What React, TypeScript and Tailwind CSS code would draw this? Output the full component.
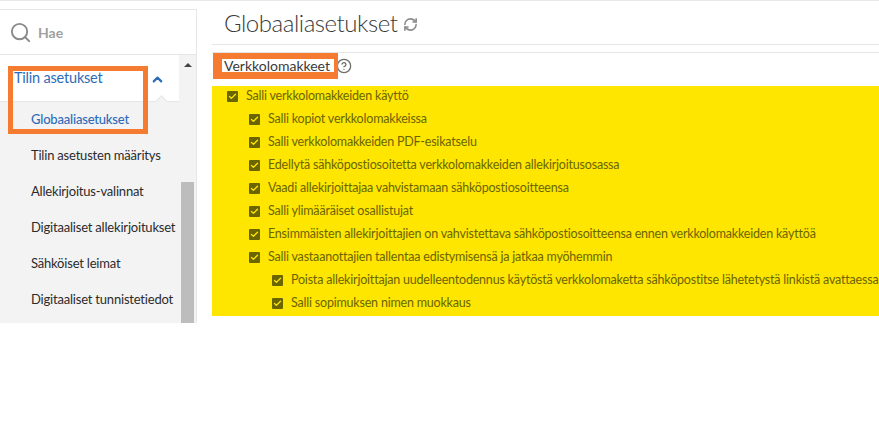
import React from 'react';
import { Check, ChevronUp, HelpCircle, RefreshCw, Search } from 'lucide-react';

const navItems = [
  'Tilin asetusten määritys',
  'Allekirjoitus-valinnat',
  'Digitaaliset allekirjoitukset',
  'Sähköiset leimat',
  'Digitaaliset tunnistetiedot',
];

const options = [
  { label: 'Salli verkkolomakkeiden käyttö', indent: 0 },
  { label: 'Salli kopiot verkkolomakkeissa', indent: 1 },
  { label: 'Salli verkkolomakkeiden PDF-esikatselu', indent: 1 },
  { label: 'Edellytä sähköpostiosoitetta verkkolomakkeiden allekirjoitusosassa', indent: 1 },
  { label: 'Vaadi allekirjoittajaa vahvistamaan sähköpostiosoitteensa', indent: 1 },
  { label: 'Salli ylimääräiset osallistujat', indent: 1 },
  { label: 'Ensimmäisten allekirjoittajien on vahvistettava sähköpostiosoitteensa ennen verkkolomakkeiden käyttöä', indent: 1 },
  { label: 'Salli vastaanottajien tallentaa edistymisensä ja jatkaa myöhemmin', indent: 1 },
  { label: 'Poista allekirjoittajan uudelleentodennus käytöstä verkkolomaketta sähköpostitse lähetetystä linkistä avattaessa', indent: 2 },
  { label: 'Salli sopimuksen nimen muokkaus', indent: 2 },
];

function Option({ label, indent }: { label: string; indent: number }) {
  const pad = indent === 0 ? 'pl-[15px]' : indent === 1 ? 'pl-[37px]' : 'pl-[60px]';
  return (
    <div className={`flex h-[23px] items-center whitespace-nowrap ${pad}`}>
      <span className="mr-[8px] flex h-[11px] w-[11px] shrink-0 items-center justify-center rounded-[1px] bg-[#6b6500]">
        <Check size={9} strokeWidth={3.5} className="text-[#ffe600]" />
      </span>
      <span className="text-[12.5px] tracking-[-0.2px] text-[#6b6500]">{label}</span>
    </div>
  );
}

export default function App() {
  return (
    <div className="relative h-[431px] w-[879px] overflow-hidden bg-white font-['Lato',sans-serif]">
      <div className="flex h-[323px] border-t border-[#e8e8e8]">
        {/* Sidebar */}
        <aside className="mt-[8px] flex w-[197px] shrink-0 flex-col border-r border-[#e6e6e6]">
          <div className="flex h-[46px] shrink-0 items-center gap-[6px] border-y border-[#e6e6e6] pl-[9px]">
            <Search size={23} strokeWidth={2} className="text-[#8a8a8a]" />
            <span className="text-[14px] font-bold text-[#a0a0a0]">Hae</span>
          </div>
          <div className="flex min-h-0 flex-1">
            <div className="min-w-0 flex-1 bg-[#f3f3f3]">
              <div className="relative flex h-[47px] items-start justify-between border-b border-[#e6e6e6] bg-white pl-[14px] pr-[14px] pt-[13px]">
                <span className="text-[14.5px] leading-[20px] tracking-[-0.2px] text-[#2d6cb8]">Tilin asetukset</span>
                <ChevronUp size={15} strokeWidth={3.5} className="mt-[4px] text-[#2d6cb8]" />
                <div className="absolute bottom-[-5px] right-[13px] h-[9px] w-[9px] rotate-45 border-l border-t border-[#e6e6e6] bg-[#f3f3f3]" />
              </div>
              <div className="pl-[31px] text-[13px] tracking-[-0.2px] text-[#2b2b2b]">
                <div className="flex h-[36px] items-center font-medium text-[#2d6cb8]">Globaaliasetukset</div>
                {navItems.map((item) => (
                  <div key={item} className="flex h-[36px] items-center whitespace-nowrap">
                    {item}
                  </div>
                ))}
              </div>
            </div>
            <div className="flex w-[17px] shrink-0 flex-col items-center bg-[#f3f3f3]">
              <div className="mt-[8px] h-0 w-0 border-x-[4px] border-b-[4px] border-x-transparent border-b-[#444]" />
              <div className="mt-[115px] w-[13px] flex-1 bg-[#bdbdbd]" />
            </div>
          </div>
        </aside>

        {/* Main */}
        <main className="min-w-0 flex-1 pl-[15px]">
          <div className="flex h-[44px] items-center gap-[5px] border-b border-[#e6e6e6] pl-[12px]">
            <h1 className="text-[24px] font-light tracking-[-0.45px] text-[#3a3a3a]">Globaaliasetukset</h1>
            <RefreshCw size={15} strokeWidth={2.5} className="mt-[3px] text-[#8a8a8a]" />
          </div>
          <div className="mt-[7px] flex h-[34px] items-start gap-[6px] border-t border-[#e6e6e6] pl-[12px] pt-[3px]">
            <span className="text-[14px] leading-[20px] text-[#3a3a3a]">Verkkolomakkeet</span>
            <HelpCircle size={16} className="mt-[2px] text-[#6e6e6e]" />
          </div>
          <div className="h-[230px] bg-[#ffe600]">
            <div className="-translate-y-px">
              {options.map((o) => (
                <Option key={o.label} label={o.label} indent={o.indent} />
              ))}
            </div>
          </div>
        </main>
      </div>

      {/* Orange annotation frames */}
      <div className="absolute left-[8px] top-[66px] h-[68px] w-[140px] border-[5px] border-[#f47b2f]" />
      <div className="absolute left-[213px] top-[53px] h-[26px] w-[125px] border-b-[7px] border-l-[9px] border-r-[4px] border-t-[6px] border-[#f47b2f]" />
    </div>
  );
}
